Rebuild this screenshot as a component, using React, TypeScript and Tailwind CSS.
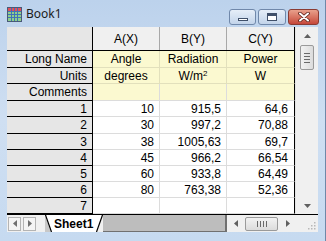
import React from 'react';

const rows: [string, string, string, string][] = [
    ['1', '10', '915,5', '64,6'],
    ['2', '30', '997,2', '70,88'],
    ['3', '38', '1005,63', '69,7'],
    ['4', '45', '966,2', '66,54'],
    ['5', '60', '933,8', '64,49'],
    ['6', '80', '763,38', '52,36'],
    ['7', '', '', ''],
];

// row heights so the 10 body rows fill 51 -> 214
const rowH = ['h-[16px]', 'h-[17px]', 'h-[16px]', 'h-[16px]', 'h-[16px]', 'h-[16px]', 'h-[16px]'];

function BookIcon() {
    return (
        <svg width="15" height="15" viewBox="0 0 15 15">
            <rect x="0.5" y="0.5" width="14" height="14" fill="#8fd08a" stroke="#4a5a78" />
            <rect x="1" y="1" width="13" height="3" fill="#e2505a" />
            <path d="M1 4.5H14M1 7.5H14M1 10.5H14M4.5 1V14M7.5 1V14M10.5 1V14" stroke="#3f73b8" strokeWidth="1" />
        </svg>
    );
}

function TitleButtons() {
    return (
        <div className="flex items-start gap-[2px] pt-[9px]">
            <div className="w-[27px] h-[16px] rounded-[3px] border border-[#7088aa] bg-gradient-to-b from-[#e6eef8] to-[#c3d4ea] flex items-end justify-center pb-[3px]">
                <div className="w-[10px] h-[3px] bg-white border border-[#40506a]" />
            </div>
            <div className="w-[28px] h-[16px] rounded-[3px] border border-[#7088aa] bg-gradient-to-b from-[#e6eef8] to-[#c3d4ea] flex items-center justify-center">
                <div className="w-[10px] h-[8px] bg-white border border-[#40506a] border-t-[3px]" />
            </div>
            <div className="w-[31px] h-[16px] rounded-[3px] border border-[#8a3b33] bg-gradient-to-b from-[#e8a08c] to-[#c5463a] flex items-center justify-center">
                <svg width="12" height="10" viewBox="0 0 12 10">
                    <path d="M2 1.5L10 8.5M10 1.5L2 8.5" stroke="#5a2018" strokeWidth="3.6" strokeLinecap="round" />
                    <path d="M2 1.5L10 8.5M10 1.5L2 8.5" stroke="#ffffff" strokeWidth="2" strokeLinecap="round" />
                </svg>
            </div>
        </div>
    );
}

function VScroll() {
    return (
        <div className="w-[24px] flex flex-col items-center bg-[#f0f0f0] border-l border-[#e4e4e4]">
            <div className="h-[18px] flex items-center justify-center">
                <svg width="7" height="4" viewBox="0 0 7 4"><path d="M0 4L3.5 0L7 4Z" fill="#606060" /></svg>
            </div>
            <div className="w-[14px] h-[25px] rounded-[2px] border border-[#9a9a9a] bg-gradient-to-r from-[#f2f2f2] to-[#dcdcdc] flex flex-col items-center justify-center gap-[2px]">
                <div className="w-[6px] h-px bg-[#6a6a6a]" />
                <div className="w-[6px] h-px bg-[#6a6a6a]" />
                <div className="w-[6px] h-px bg-[#6a6a6a]" />
                <div className="w-[6px] h-px bg-[#6a6a6a]" />
            </div>
            <div className="flex-1" />
            <div className="h-[17px] flex items-center justify-center">
                <svg width="7" height="4" viewBox="0 0 7 4"><path d="M0 0L3.5 4L7 0Z" fill="#606060" /></svg>
            </div>
        </div>
    );
}

function TabBar() {
    return (
        <div className="h-[18px] flex bg-[#f0f0f0] border-t border-black">
            <div className="flex items-center gap-[2px] pl-[1px]">
                <div className="w-[13px] h-[14px] border border-[#b4b4b4] bg-[#f4f4f4] flex items-center justify-center">
                    <svg width="4" height="7" viewBox="0 0 4 7"><path d="M4 0L0 3.5L4 7Z" fill="#707070" /></svg>
                </div>
                <div className="w-[13px] h-[14px] border border-[#b4b4b4] bg-[#f4f4f4] flex items-center justify-center">
                    <svg width="4" height="7" viewBox="0 0 4 7"><path d="M0 0L4 3.5L0 7Z" fill="#707070" /></svg>
                </div>
            </div>
            <div className="flex ml-[9px]">
                <svg width="8" height="17" viewBox="0 0 8 17">
                    <path d="M0 0L6 17H0Z" fill="#c8c8c8" />
                    <path d="M0 0L6 17H8V0Z" fill="#ffffff" />
                    <path d="M0.5 0L6.5 17" stroke="#000" strokeWidth="1.2" />
                </svg>
                <div className="bg-white flex items-center pl-[1px] pr-[2px] text-[12px] font-bold text-black font-['Liberation_Sans',Arial,sans-serif]">
                    Sheet1
                </div>
                <svg width="8" height="17" viewBox="0 0 8 17">
                    <path d="M8 0L2 17H0V0Z" fill="#ffffff" />
                    <path d="M7.5 0L1.5 17" stroke="#000" strokeWidth="1.2" />
                </svg>
            </div>
            <div className="flex-1 bg-[#bdbdbd] border-r-2 border-b border-[#707070]" />
            <div className="w-[70px] flex items-center">
                <div className="w-[18px] flex justify-center">
                    <svg width="4" height="7" viewBox="0 0 4 7"><path d="M4 0L0 3.5L4 7Z" fill="#606060" /></svg>
                </div>
                <div className="w-[33px] h-[14px] rounded-[2px] border border-[#9a9a9a] bg-gradient-to-b from-[#f2f2f2] to-[#dcdcdc] flex items-center justify-center gap-[2px]">
                    <div className="w-px h-[6px] bg-[#6a6a6a]" />
                    <div className="w-px h-[6px] bg-[#6a6a6a]" />
                    <div className="w-px h-[6px] bg-[#6a6a6a]" />
                    <div className="w-px h-[6px] bg-[#6a6a6a]" />
                </div>
                <div className="flex-1 flex justify-center">
                    <svg width="4" height="7" viewBox="0 0 4 7"><path d="M0 0L4 3.5L0 7Z" fill="#606060" /></svg>
                </div>
            </div>
            <div className="w-[21px] flex items-end justify-end pr-[2px] pb-[2px]">
                <svg width="9" height="9" viewBox="0 0 9 9">
                    <rect x="7" y="1" width="1.5" height="1.5" fill="#b8b8b8" />
                    <rect x="4" y="4" width="1.5" height="1.5" fill="#b8b8b8" />
                    <rect x="7" y="4" width="1.5" height="1.5" fill="#b8b8b8" />
                    <rect x="1" y="7" width="1.5" height="1.5" fill="#b8b8b8" />
                    <rect x="4" y="7" width="1.5" height="1.5" fill="#b8b8b8" />
                    <rect x="7" y="7" width="1.5" height="1.5" fill="#b8b8b8" />
                </svg>
            </div>
        </div>
    );
}

export default function App() {
    const yellow = 'bg-[#fbf9d0]';

    return (
        <div className="w-[326px] h-[241px] flex flex-col bg-gradient-to-b from-[#bcd2ec] via-[#cfdff2] to-[#c6daf0] border-r border-[#6f88a8] overflow-hidden font-['Liberation_Sans',Arial,sans-serif] text-[12px] text-black">
            {/* title bar */}
            <div className="h-[27px] flex pl-[7px] pr-[6px]">
                <div className="flex items-center gap-[4px] pt-[1px]">
                    <BookIcon />
                    <span className="text-[12px] text-[#1b1b1b] font-['Noto_Sans',sans-serif]">Book1</span>
                </div>
                <div className="flex-1" />
                <TitleButtons />
            </div>

            {/* client area */}
            <div className="mx-[7px] h-[205px] flex flex-col bg-white">
                <div className="flex-1 flex">
                    <div className="w-[288px] flex flex-col">
                        {/* column header row */}
                        <div className="h-[24px] flex border-b border-black">
                            <div className="w-[86px] bg-[#e6e6e6] border-r border-black" />
                            <div className="w-[67px] bg-[#f0f0f0] border-r border-[#a8a8a8] flex items-center justify-center">A(X)</div>
                            <div className="w-[67px] bg-[#f0f0f0] border-r border-[#a8a8a8] flex items-center justify-center">B(Y)</div>
                            <div className="w-[68px] bg-[#f0f0f0] border-r border-black flex items-center justify-center">C(Y)</div>
                        </div>
                        {/* label rows */}
                        <div className="h-[17px] flex">
                            <div className="w-[86px] bg-[#e6e6e6] border-r border-b border-black flex items-center justify-end pr-[5px]">Long Name</div>
                            <div className={`w-[67px] ${yellow} border-r border-b border-[#e2e0bc] flex items-center justify-center`}>Angle</div>
                            <div className={`w-[67px] ${yellow} border-r border-b border-[#e2e0bc] flex items-center justify-center`}>Radiation</div>
                            <div className={`w-[68px] ${yellow} border-r border-r-black border-b border-b-[#e2e0bc] flex items-center justify-center`}>Power</div>
                        </div>
                        <div className="h-[16px] flex">
                            <div className="w-[86px] bg-[#e6e6e6] border-r border-b border-black flex items-center justify-end pr-[5px]">Units</div>
                            <div className={`w-[67px] ${yellow} border-r border-b border-[#e2e0bc] flex items-center justify-center`}>degrees</div>
                            <div className={`w-[67px] ${yellow} border-r border-b border-[#e2e0bc] flex items-center justify-center`}>
                                <span>W/m<sup className="text-[8px]">2</sup></span>
                            </div>
                            <div className={`w-[68px] ${yellow} border-r border-r-black border-b border-b-[#e2e0bc] flex items-center justify-center`}>W</div>
                        </div>
                        <div className="h-[17px] flex">
                            <div className="w-[86px] bg-[#e6e6e6] border-r border-b border-black flex items-center justify-end pr-[5px]">Comments</div>
                            <div className={`w-[67px] ${yellow} border-r border-b border-[#dcdcdc]`} />
                            <div className={`w-[67px] ${yellow} border-r border-b border-[#dcdcdc]`} />
                            <div className={`w-[68px] ${yellow} border-r border-r-black border-b border-b-[#dcdcdc]`} />
                        </div>
                        {/* data rows */}
                        {rows.map((r, i) => (
                            <div key={r[0]} className={`${rowH[i]} flex`}>
                                <div className="w-[86px] bg-[#e6e6e6] border-r border-b border-black flex items-center justify-end pr-[5px]">{r[0]}</div>
                                <div className="w-[67px] border-r border-b border-[#dcdcdc] flex items-center justify-end pr-[5px]">{r[1]}</div>
                                <div className="w-[67px] border-r border-b border-[#dcdcdc] flex items-center justify-end pr-[5px]">{r[2]}</div>
                                <div className="w-[68px] border-r border-r-black border-b border-b-[#dcdcdc] flex items-center justify-end pr-[6px]">{r[3]}</div>
                            </div>
                        ))}
                        <div className="flex-1 flex">
                            <div className="w-[86px] bg-[#e6e6e6] border-r border-black" />
                            <div className="flex-1" />
                        </div>
                    </div>
                    <VScroll />
                </div>
                <TabBar />
            </div>
            <div className="flex-1" />
        </div>
    );
}
